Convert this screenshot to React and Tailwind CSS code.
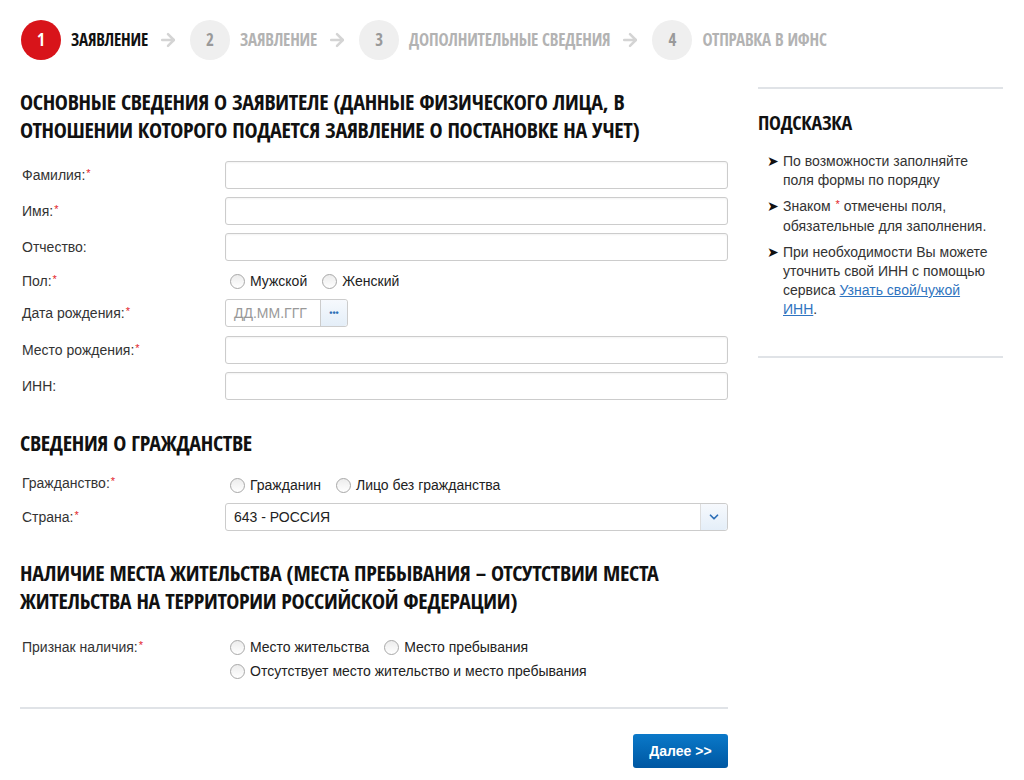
import React from "react";
import { ArrowRight, ChevronDown } from "lucide-react";

const cond = "font-['Open_Sans_Condensed','Open_Sans',sans-serif] font-stretch-[75%] font-bold uppercase";

const steps = [
  { n: 1, t: "Заявление", active: true },
  { n: 2, t: "Заявление" },
  { n: 3, t: "Дополнительные сведения" },
  { n: 4, t: "Отправка в ИФНС" },
];

const Req = () => <span className="relative -top-[3px] ml-[1px] text-[11px] text-[#e3232b]">*</span>;

const Input = ({ className = "" }) => (
  <div className={`h-[28px] rounded-[3px] border border-[#cccccc] bg-white shadow-[inset_0_1px_2px_rgba(0,0,0,0.05)] ${className}`} />
);

const Radio = ({ label }) => (
  <label className="flex items-center gap-[5px] leading-[20px] text-[#222]">
    <span className="h-[15px] w-[15px] rounded-full border border-[#a8a8a8] bg-gradient-to-b from-[#ececec] to-white" />
    {label}
  </label>
);

const Row = ({ label, req, children, className = "", labelCls = "pt-[4px]" }) => (
  <div className={`flex items-start ${className}`}>
    <div className={`w-[205px] shrink-0 pl-[2px] leading-[20px] ${labelCls}`}>
      {label}{req && <Req />}
    </div>
    <div className="flex-1">{children}</div>
  </div>
);

const Heading = ({ children, className = "" }) => (
  <h2 className={`${cond} text-[22px] leading-[28px] tracking-[-0.3px] text-[#111] ${className}`}>{children}</h2>
);

const Hint = ({ children }) => (
  <li className="flex">
    <span className="w-[16px] shrink-0 text-[14px] leading-[19px] text-[#111]">➤</span>
    <span className="w-[208px]">{children}</span>
  </li>
);

export default function App() {
  return (
    <div className="h-[780px] w-[1024px] overflow-hidden bg-white font-['Liberation_Sans',Arial,sans-serif] text-[14px] text-[#333]">
      <div className="flex h-[80px] items-center whitespace-nowrap pl-[21px]">
        {steps.map((s, i) => (
          <div key={s.n} className="flex items-center">
            {i > 0 && <ArrowRight size={20} strokeWidth={3} className="ml-[10px] mr-[12px] text-[#d4d4d4]" />}
            <div className={`${cond} flex h-[40px] w-[40px] items-center justify-center rounded-full text-[17px] ${s.active ? "bg-[#d8141a] text-white" : "bg-[#efefef] text-[#999]"}`}>
              {s.n}
            </div>
            <span className={`${cond} ml-[10px] text-[17px] tracking-[-0.2px] ${s.active ? "text-[#111]" : "text-[#b3b3b3]"}`}>{s.t}</span>
          </div>
        ))}
      </div>

      <div className="flex gap-[30px] px-[20px]">
        <div className="w-[708px] shrink-0">
          <Heading className="mt-[7px]">
            Основные сведения о заявителе (данные физического лица, в<br />отношении которого подается заявление о постановке на учет)
          </Heading>

          <div className="mt-[18px] flex flex-col gap-[8px]">
            <Row label="Фамилия:" req><Input /></Row>
            <Row label="Имя:" req><Input /></Row>
            <Row label="Отчество:"><Input /></Row>
            <Row label="Пол:" req className="h-[22px]" labelCls="pt-[2px]">
              <div className="flex gap-[15px] pl-[5px] pt-[2px]">
                <Radio label="Мужской" />
                <Radio label="Женский" />
              </div>
            </Row>
            <Row label="Дата рождения:" req>
              <div className="flex h-[28px] w-[123px] rounded-[3px] border border-[#cccccc]">
                <div className="flex w-[94px] items-center px-[8px] text-[#999]">ДД.ММ.ГГГ</div>
                <div className="flex flex-1 items-center justify-center rounded-r-[3px] border-l border-[#cccccc] bg-gradient-to-b from-[#f6f9fd] to-[#e4eef8] text-[9px] font-bold leading-none text-[#2d6fb7]">•••</div>
              </div>
            </Row>
            <Row label="Место рождения:" req className="mt-[1px]"><Input /></Row>
            <Row label="ИНН:"><Input /></Row>
          </div>

          <Heading className="mt-[28px]">Сведения о гражданстве</Heading>

          <div className="mt-[17px] flex flex-col gap-[8px]">
            <Row label="Гражданство:" req labelCls="" className="h-[22px]">
              <div className="flex gap-[15px] pl-[5px] pt-[2px]">
                <Radio label="Гражданин" />
                <Radio label="Лицо без гражданства" />
              </div>
            </Row>
            <Row label="Страна:" req>
              <div className="flex h-[28px] rounded-[3px] border border-[#cccccc]">
                <div className="flex flex-1 items-center px-[8px] text-[#222]">643 - РОССИЯ</div>
                <div className="flex w-[27px] items-center justify-center rounded-r-[3px] border-l border-[#dddddd] bg-gradient-to-b from-[#f6f9fd] to-[#e4eef8]">
                  <ChevronDown size={14} strokeWidth={3} className="text-[#2d6fb7]" />
                </div>
              </div>
            </Row>
          </div>

          <Heading className="mt-[27px]">
            Наличие места жительства (места пребывания – отсутствии места<br />жительства на территории Российской Федерации)
          </Heading>

          <div className="mt-[23px]">
            <Row label="Признак наличия:" req labelCls="">
              <div className="flex flex-col gap-[4px] pl-[5px]">
                <div className="flex gap-[15px]">
                  <Radio label="Место жительства" />
                  <Radio label="Место пребывания" />
                </div>
                <Radio label="Отсутствует место жительство и место пребывания" />
              </div>
            </Row>
          </div>

          <div className="mt-[26px] border-t-2 border-[#e0e3e7]" />

          <div className="mt-[25px] flex justify-end">
            <button className="h-[34px] w-[95px] rounded-[3px] bg-gradient-to-b from-[#0b79c9] to-[#0057a2] text-[14px] font-bold text-white">
              Далее &gt;&gt;
            </button>
          </div>
        </div>

        <div className="w-[245px] shrink-0 pt-[7px]">
          <div className="border-t-2 border-[#e0e3e7]" />
          <h3 className={`${cond} mt-[21px] text-[20px] leading-[26px] tracking-[-0.3px] text-[#111]`}>Подсказка</h3>
          <ul className="mt-[16px] flex flex-col gap-[7px] pl-[9px] leading-[19px]">
            <Hint>По возможности заполняйте поля формы по порядку</Hint>
            <Hint>Знаком <Req /> отмечены поля, обязательные для заполнения.</Hint>
            <Hint>
              При необходимости Вы можете уточнить свой ИНН с помощью сервиса <a className="text-[#2f74c0] underline">Узнать свой/чужой ИНН</a>.
            </Hint>
          </ul>
          <div className="mt-[37px] border-t-2 border-[#e0e3e7]" />
        </div>
      </div>
    </div>
  );
}
